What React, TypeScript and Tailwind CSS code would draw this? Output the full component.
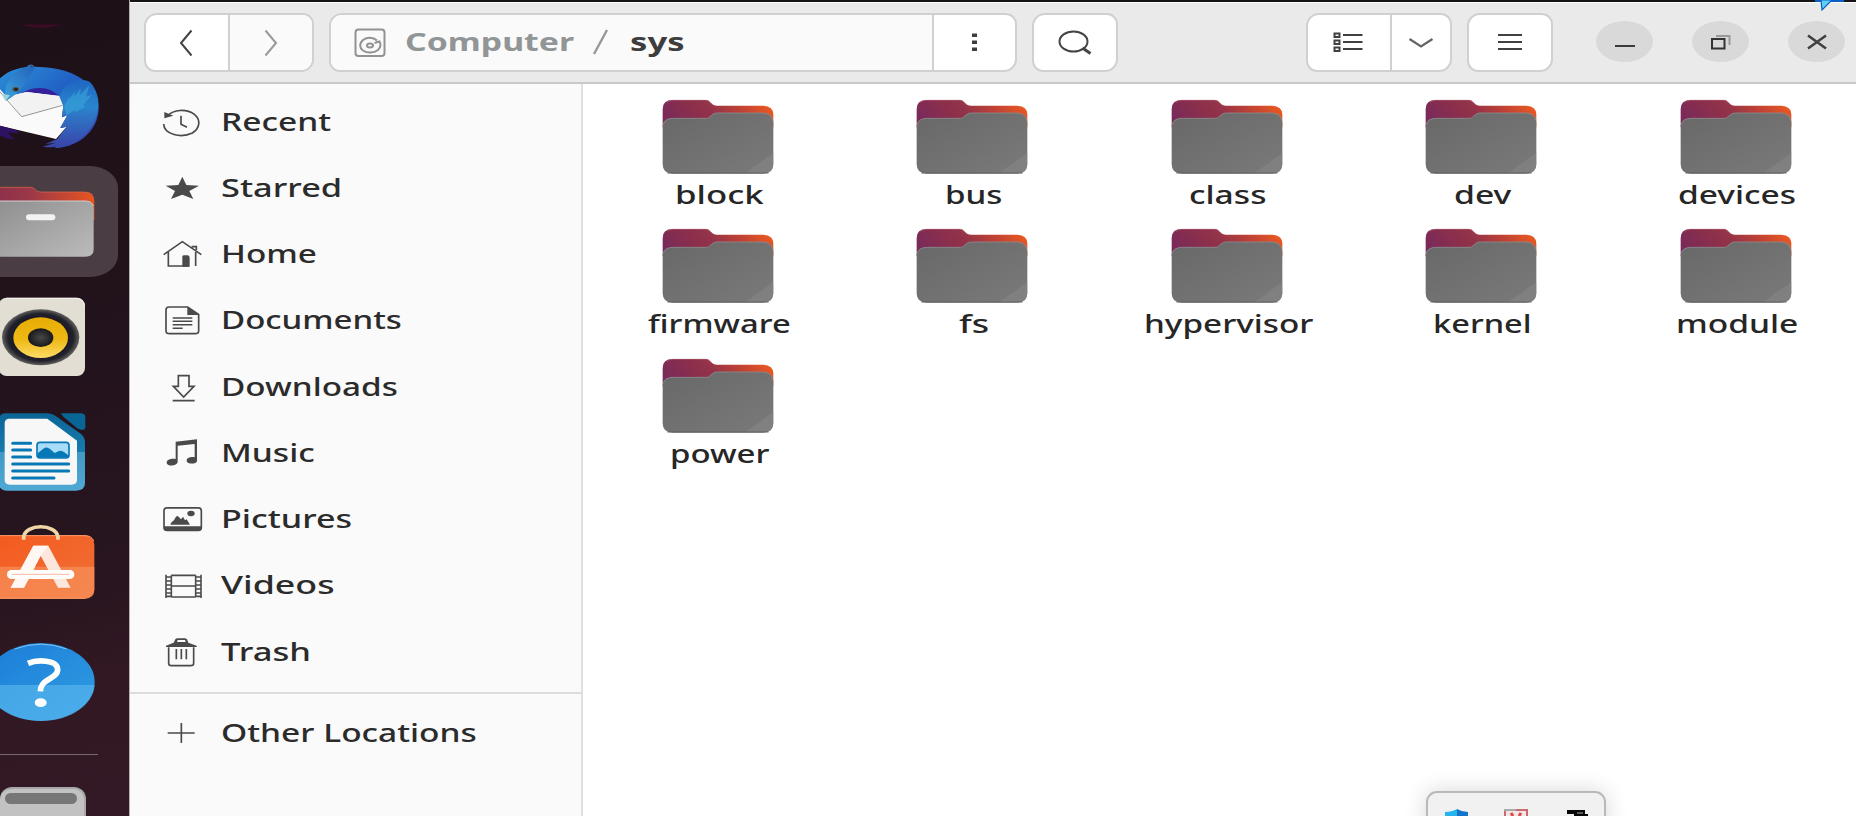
import { useLayoutEffect, useRef, useState, type ReactNode } from "react";

/** Text stretched horizontally so that it takes up exactly `width` pixels. */
function FitText({ text, width, className = "" }: { text: string; width: number; className?: string }) {
  const ref = useRef<HTMLSpanElement>(null);
  const [scale, setScale] = useState(1.3);
  useLayoutEffect(() => {
    if (ref.current) setScale(width / ref.current.offsetWidth);
  }, [width, text]);
  return (
    <span className="inline-block shrink-0" style={{ width }}>
      <span
        ref={ref}
        className={`inline-block origin-left whitespace-nowrap ${className}`}
        style={{ transform: `scaleX(${scale})` }}
      >
        {text}
      </span>
    </span>
  );
}

function Thunderbird() {
  return (
    <svg className="mt-[58px] h-[96px] w-[128px] shrink-0" viewBox="0 174 384 288">
      <defs>
        <linearGradient id="tb" x1="0" y1="0" x2="1" y2="1">
          <stop offset="0" stopColor="#2b8fd6" />
          <stop offset=".45" stopColor="#2160c4" />
          <stop offset="1" stopColor="#3d3fae" />
        </linearGradient>
        <linearGradient id="tbHead" x1="0" y1="1" x2="1" y2="0">
          <stop offset="0" stopColor="#3ba3dd" />
          <stop offset="1" stopColor="#2262ba" />
        </linearGradient>
        <linearGradient id="tbWing" x1="0" y1="0" x2="0" y2="1">
          <stop offset="0" stopColor="#1f66c2" />
          <stop offset=".4" stopColor="#2a84ce" />
          <stop offset="1" stopColor="#3a44a8" />
        </linearGradient>
      </defs>
      <path d="M0 235C40 195 110 196 160 205C240 218 296 262 296 325C296 385 245 440 165 445L200 380L182 290L100 270L0 300Z" fill="url(#tb)" />
      <path d="M50 290C90 255 150 255 178 290L175 300L60 300Z" fill="#34219a" />
      <path d="M0 268L20 290L80 276L178 288L190 318L186 352L202 346L182 384L200 380L168 417L0 377Z" fill="#fafafa" />
      <path d="M20 290L65 350L188 316L178 288L80 276Z" fill="#f2f2f3" />
      <path d="M0 276L65 350L188 316" fill="none" stroke="#96969a" strokeWidth="3" />
      <path d="M0 377L48 390L58 402L22 396L42 417C22 417 8 411 0 405Z" fill="#2d1264" />
      <path d="M178 288C190 250 240 225 272 248C308 290 304 360 250 408C216 436 170 446 128 440L168 428L136 432L172 417L200 380L180 384L202 346L186 352L190 318Z" fill="url(#tbWing)" />
      <path d="M192 320L210 285L206 300L226 274L222 292L242 264L240 284L268 256L258 290L276 284L250 316L256 320L224 338L228 328L200 346Z" fill="#39a5d8" opacity=".6" />
      <path d="M16 290C10 250 40 210 90 197L104 204C90 225 70 275 18 302L10 284Z" fill="url(#tbHead)" />
      <path d="M82 205C85 192 98 194 102 202" fill="none" stroke="#37719e" strokeWidth="4" />
      <path d="M6 282L30 286L16 303Z" fill="#9fd5d8" />
      <ellipse cx="47" cy="268" rx="10" ry="7" fill="#51513f" />
      <ellipse cx="48" cy="268" rx="5" ry="4" fill="#201a18" />
    </svg>
  );
}

function FilesApp() {
  return (
    <div className="mt-[12px] flex h-[111px] w-[118px] shrink-0 items-start rounded-r-[28px_22px] bg-[#4a3d43] pt-[18px]">
      <svg className="h-[75px] w-[100px]" viewBox="0 552 300 225">
        <defs>
          <linearGradient id="fa" x1="0" x2="1">
            <stop offset="0" stopColor="#8c3049" />
            <stop offset=".35" stopColor="#9c3848" />
            <stop offset="1" stopColor="#e9541f" />
          </linearGradient>
          <linearGradient id="fb" x1="0" y1="0" x2="1" y2="1">
            <stop offset="0" stopColor="#8f8f8f" />
            <stop offset="1" stopColor="#bbbbbb" />
          </linearGradient>
        </defs>
        <path d="M-10 562H92Q100 562 106 569Q112 576 122 576H250Q283 576 283 602V660H-10Z" fill="url(#fa)" />
        <path d="M-10 562H92Q100 562 106 569Q112 576 122 576H250Q270 576 278 584" fill="none" stroke="#e06a4e" strokeWidth="2" />
        <path d="M-10 603H255Q281 603 281 625V748Q281 770 255 770H-10Z" fill="url(#fb)" />
        <path d="M-10 603H255Q276 603 280 618" fill="none" stroke="#cfcfcf" strokeWidth="3" />
        <rect x="78" y="643" width="88" height="18" rx="9" fill="#f2f2f2" />
      </svg>
    </div>
  );
}

function Rhythmbox() {
  return (
    <svg className="mt-[20px] h-[80px] w-[88px] shrink-0" viewBox="0 51 264 240">
      <defs>
        <linearGradient id="ry" x1="0" y1="0" x2="0" y2="1">
          <stop offset="0" stopColor="#e7ac05" />
          <stop offset=".55" stopColor="#efb915" />
          <stop offset="1" stopColor="#fbdc66" />
        </linearGradient>
        <radialGradient id="rr">
          <stop offset=".65" stopColor="#171522" />
          <stop offset=".85" stopColor="#22222c" />
          <stop offset="1" stopColor="#62625f" />
        </radialGradient>
        <radialGradient id="rc">
          <stop offset="0" stopColor="#484848" />
          <stop offset="1" stopColor="#191919" />
        </radialGradient>
      </defs>
      <rect x="-4" y="53" width="259" height="235" rx="24" fill="#e2ded4" />
      <path d="M18 55H230Q250 56 253 78" fill="none" stroke="#f4f3ef" strokeWidth="3" />
      <ellipse cx="122" cy="172" rx="116" ry="84" fill="url(#rr)" />
      <ellipse cx="122" cy="173" rx="82" ry="61" fill="url(#ry)" />
      <ellipse cx="122" cy="173" rx="38" ry="28" fill="url(#rc)" />
    </svg>
  );
}

function Writer() {
  return (
    <svg className="mt-[35px] h-[80px] w-[88px] shrink-0" viewBox="0 396 264 240">
      <defs>
        <linearGradient id="wr" x1="0" y1="0" x2="0" y2="1">
          <stop offset="0" stopColor="#0b6597" />
          <stop offset=".5" stopColor="#187bad" />
          <stop offset=".5" stopColor="#4098c4" />
          <stop offset="1" stopColor="#50a8d5" />
        </linearGradient>
      </defs>
      <path d="M16 400H142Q156 400 168 409L240 460Q255 470 255 488V610Q255 632 228 632H22Q-3 632 -3 610V422Q-3 400 16 400Z" fill="url(#wr)" />
      <path d="M183 400H242Q256 400 256 412V440Q256 452 242 449Q234 447 226 440L190 410Q184 404 183 400Z" fill="#086594" />
      <path d="M28 416H142L231 482V600Q231 614 214 614H30Q14 614 14 600V430Q14 416 28 416Z" fill="#f7f7f7" />
      <path d="M38 489.500H92M38 510H92M38 531H92M38 552H206M38 573H206M38 594H162" stroke="#0678b6" strokeWidth="9" strokeLinecap="round" />
      <rect x="111" y="487" width="96" height="47" rx="9" fill="#a9dcf8" stroke="#0678b6" strokeWidth="5" />
      <path d="M113 520L130 506Q140 498 150 507L164 519L177 513Q185 510 193 517L205 526V533H113Z" fill="#0678b6" />
    </svg>
  );
}

function Software() {
  return (
    <svg className="mt-[31px] h-[80px] w-[100px] shrink-0" viewBox="0 -20 300 240">
      <defs>
        <linearGradient id="sw" x1="0" y1="0" x2="1" y2="1">
          <stop offset="0" stopColor="#f45a1f" />
          <stop offset="1" stopColor="#f07036" />
        </linearGradient>
      </defs>
      <rect x="-20" y="17" width="303" height="190" rx="28" fill="url(#sw)" />
      <path d="M0 111H283V182Q283 207 255 207H0Z" fill="#f7935e" opacity=".65" />
      <path d="M0 18H255Q275 18 281 34" fill="none" stroke="#ff9c6c" strokeWidth="3" />
      <path d="M0 206H255" fill="none" stroke="#fb965f" strokeWidth="3" />
      <path d="M71 30V22C76 -19 168 -19 174 22V30" fill="none" stroke="#f1d7a8" strokeWidth="11" />
      <path d="M100 48H145L212 174H174L122 78L72 174H32Z" fill="#fde7dc" />
      <path d="M100 48H145L122 78L72 174H32Z" fill="#fff7f2" />
      <rect x="21" y="121" width="202" height="27" rx="13.500" fill="#fffdfb" />
      <path d="M36 134H208" stroke="#f9b9a3" strokeWidth="3" />
    </svg>
  );
}

function Help() {
  return (
    <svg className="mt-[37px] h-[84px] w-[100px] shrink-0" viewBox="0 330 300 252">
      <defs>
        <linearGradient id="hp" x1="0" y1="0" x2="1" y2="1">
          <stop offset="0" stopColor="#1b7dd8" />
          <stop offset="1" stopColor="#309de2" />
        </linearGradient>
      </defs>
      <ellipse cx="122" cy="456" rx="162" ry="117" fill="url(#hp)" />
      <path d="M-40 465H284C280 526 210 573 122 573C34 573 -36 526 -40 465Z" fill="#55b4ec" opacity=".7" />
      <path d="M44 357Q122 328 200 357" fill="none" stroke="#7cc5f5" strokeWidth="3" />
      <path d="M84 400C110 389 172 388 173 418C174 448 122 443 121 484" fill="none" stroke="#fff" strokeWidth="17" />
      <ellipse cx="122" cy="518" rx="18" ry="13" fill="#fff" />
    </svg>
  );
}

function DockTrash() {
  return (
    <div className="mt-[32px] h-[40px] w-[86px] shrink-0 rounded-t-[12px] border-t-2 border-r-2 border-[#a8a8a8] bg-[#c2c2c2] pt-[4px] pl-[5px]">
      <div className="h-[11px] w-[72px] rounded-full bg-[#777777]" />
    </div>
  );
}

function Dock() {
  return (
    <aside className="flex h-full w-[129px] shrink-0 flex-col overflow-hidden bg-[linear-gradient(168deg,#1d1017_0%,#23131c_45%,#28151f_72%,#311823_82%,#321925_100%)]">
      <svg className="-mb-[30px] h-[30px] w-[128px] shrink-0" viewBox="0 0 128 30">
        <path d="M20 24.500H62Q50 28 41 28Q32 28 20 24.500Z" fill="#3a0c25" />
      </svg>
      <Thunderbird />
      <FilesApp />
      <Rhythmbox />
      <Writer />
      <Software />
      <Help />
      <div className="mt-[30px] h-px w-[98px] shrink-0 bg-[#79676f]" />
      <DockTrash />
    </aside>
  );
}

function HeaderBar() {
  const group = "flex h-[59px] shrink-0 overflow-hidden rounded-[13px_11px] border-2 border-[#d0d0d0] bg-white";
  const cell = "flex items-center justify-center";
  const round = "flex h-[41px] w-[57px] shrink-0 items-center justify-center rounded-[50%] bg-[#d9d9d9]";
  return (
    <header className="flex h-[82px] w-full shrink-0 items-start border-t border-b-2 border-t-white border-b-[#c9c9c9] bg-[#eaeaea] pt-[10px] pl-[14px]">
      <div className={`${group} w-[170px]`}>
        <div className={`${cell} w-[84px] border-r-2 border-[#d0d0d0] pr-[2px]`}>
          <svg width="14" height="28" viewBox="0 0 14 28" fill="none" stroke="#444" strokeWidth="2">
            <path d="M12.500 1.500L2 14L12.500 26.500" />
          </svg>
        </div>
        <div className={`${cell} flex-1 bg-[#fafafa]`}>
          <svg width="14" height="28" viewBox="0 0 14 28" fill="none" stroke="#999" strokeWidth="2">
            <path d="M1.500 1.500L12 14L1.500 26.500" />
          </svg>
        </div>
      </div>
      <div className={`${group} ml-[15px] w-[688px]`}>
        <div className="flex w-[603px] items-center border-r-2 border-[#d0d0d0] bg-[#fafafa] pl-[23px]">
          <svg className="shrink-0" width="33" height="30" viewBox="0 0 33 30" fill="none" stroke="#929292" strokeWidth="2">
            <rect x="1.500" y="1.500" width="29" height="26.500" rx="3" />
            <path d="M23 12.500C19 9 13 9 9 12C5 15.500 5.500 20 9 22.500C13.500 25.500 20 25 24 22C26.500 19.500 27 16 25.500 13.500L20.500 15" />
            <ellipse cx="16" cy="17.500" rx="3" ry="2" />
          </svg>
          <div className="flex items-center pb-[3px] pl-[18px] text-[25px] leading-[30px]">
            <FitText text="Computer" width={169} className="font-bold text-[#929595]" />
            <svg className="mx-[18px] mt-[2px] shrink-0" width="18" height="28" viewBox="0 0 18 28">
              <path d="M2 26L15 2" stroke="#969999" strokeWidth="2.400" />
            </svg>
            <span className="pl-[2px]">
              <FitText text="sys" width={54} className="font-bold text-[#3d3d3d]" />
            </span>
          </div>
        </div>
        <div className={`${cell} flex-1 pr-[1px]`}>
          <svg width="5" height="19" viewBox="0 0 5 19" fill="#3d3d3d">
            <path d="M0 0.500H5V4H0ZM0 7.500H5V11H0ZM0 14.500H5V18H0Z" />
          </svg>
        </div>
      </div>
      <div className={`${group} ${cell} ml-[15px] w-[86px]`}>
        <svg width="34" height="25" viewBox="0 0 34 25" fill="none" stroke="#444">
          <ellipse cx="15.500" cy="11.500" rx="14" ry="10" strokeWidth="2" />
          <path d="M24.500 18L32.500 23.500" strokeWidth="3" />
        </svg>
      </div>
      <div className={`${group} ml-[188px] w-[146px]`}>
        <div className={`${cell} w-[84px] border-r-2 border-[#d0d0d0] pr-[2px]`}>
          <svg width="30" height="22" viewBox="0 0 30 22" fill="none" stroke="#404040" strokeWidth="2">
            <path d="M1.500 1.500H6.500V5H1.500ZM1.500 8.500H6.500V12H1.500ZM1.500 15.500H6.500V19H1.500ZM10 3H29.500M10 10H29.500M10 17H29.500" />
          </svg>
        </div>
        <div className={`${cell} flex-1`}>
          <svg width="26" height="12" viewBox="0 0 26 12" fill="none" stroke="#666" strokeWidth="2.300">
            <path d="M1.500 2L13 9.500L24.500 2" />
          </svg>
        </div>
      </div>
      <div className={`${group} ${cell} ml-[15px] w-[86px] pb-[2px]`}>
        <svg width="26" height="18" viewBox="0 0 26 18" stroke="#404040" strokeWidth="2">
          <path d="M1 2H25M1 9H25M1 16H25" />
        </svg>
      </div>
      <div className="flex gap-[39px] pt-[8px] pl-[43px]">
        <div className={round}>
          <svg width="20" height="12" viewBox="0 0 20 12" stroke="#3b3b3b" strokeWidth="2">
            <path d="M0 10H20" />
          </svg>
        </div>
        <div className={round}>
          <svg width="22" height="16" viewBox="0 0 22 16" fill="none" strokeWidth="2">
            <path d="M6 2H19.500V11" stroke="#999" />
            <path d="M2 5H14.500V14.500H2Z" stroke="#333" />
          </svg>
        </div>
        <div className={round}>
          <svg width="20" height="16" viewBox="0 0 20 16" stroke="#404040" strokeWidth="2.600">
            <path d="M1 1.500L19 14.500M19 1.500L1 14.500" />
          </svg>
        </div>
      </div>
    </header>
  );
}

const ink = "#4a4a4a";

const places: { name: string; width: number; box: string; icon: ReactNode }[] = [
  {
    name: "Recent",
    width: 110,
    box: "108 48 126 96",
    icon: (
      <>
        <path d="M128 77C145 59 183 55 208 73C229 90 224 115 202 129C169 145 117 134 116 102" fill="none" stroke={ink} strokeWidth="5" />
        <path d="M118 66L145 77L118 85Z" fill={ink} />
        <path d="M168 77V103L186 112" fill="none" stroke={ink} strokeWidth="5" />
      </>
    ),
  },
  {
    name: "Starred",
    width: 121,
    box: "108 247 126 96",
    icon: <path d="M172 261L184 286L222 288L193 304L205 328L172 315L138 328L150 304L122 288L160 286Z" fill={ink} />,
  },
  {
    name: "Home",
    width: 96,
    box: "108 446 126 96",
    icon: (
      <>
        <path d="M116 496L172 457L229 496M130 488V530H192M212 488V530M200 472H214V482" fill="none" stroke={ink} strokeWidth="5" />
        <path d="M172 502Q172 498 177 498H187Q194 498 194 505V532H172Z" fill={ink} />
      </>
    ),
  },
  {
    name: "Documents",
    width: 181,
    box: "108 644 126 96",
    icon: (
      <>
        <path d="M132 653H188L221 675V724Q221 733 210 733H134Q123 733 123 724V662Q123 653 132 653Z" fill="none" stroke={ink} strokeWidth="5" />
        <path d="M187 653L222 677H187Z" fill={ink} />
        <path d="M143 686H202M143 696H202M143 706H202M143 717H173" stroke={ink} strokeWidth="4.500" />
      </>
    ),
  },
  {
    name: "Downloads",
    width: 177,
    box: "108 843 126 96",
    icon: <path d="M160 857H192V889H207L176 921L145 889H160ZM143 932H209" fill="none" stroke={ink} strokeWidth="5" />,
  },
  {
    name: "Music",
    width: 94,
    box: "108 22 126 96",
    icon: (
      <>
        <path d="M152 36L216 29V42L158 48V96C158 109 125 112 125 99C125 89 140 86 152 88Z" fill={ink} />
        <path d="M209 34H216V94C214 105 185 104 185 93C185 83 200 81 209 83Z" fill={ink} />
      </>
    ),
  },
  {
    name: "Pictures",
    width: 131,
    box: "108 220.500 126 96",
    icon: (
      <>
        <rect x="117" y="235" width="112" height="68" rx="9" fill="none" stroke={ink} strokeWidth="5" />
        <path d="M117 290H229V298Q228 304 218 304H128Q118 304 117 298Z" fill={ink} />
        <path d="M136 286C140 274 146 277 151 265Q155 257 160 261L168 269L174 262L180 272L185 269L195 286Z" fill={ink} />
        <ellipse cx="198" cy="252" rx="11" ry="8" fill={ink} />
      </>
    ),
  },
  {
    name: "Videos",
    width: 113,
    box: "108 419 126 96",
    icon: (
      <path
        d="M123 436V506M139 438V504M212 438V504M228 436V506M139 438H212M139 470H212M139 503H212M123 443H139M123 455H139M123 467H139M123 479H139M123 491H139M123 501H139M212 443H228M212 455H228M212 467H228M212 479H228M212 491H228M212 501H228"
        fill="none"
        stroke={ink}
        strokeWidth="4.800"
      />
    ),
  },
  {
    name: "Trash",
    width: 90,
    box: "108 618 126 96",
    icon: (
      <>
        <path d="M123 651V647L146 638L151 628Q153 625 158 625H179Q184 625 186 628L190 638L215 647V651ZM156 636H182L180 630H158Z" fill={ink} fillRule="evenodd" />
        <path d="M131 652V700Q131 707 139 707H197Q206 707 206 700V652M154 657V688M169 657V688M184 657V688" fill="none" stroke={ink} strokeWidth="5" />
      </>
    ),
  },
];

function Place({ name, width, box, icon }: { name: string; width: number; box: string; icon: ReactNode }) {
  return (
    <li className="flex h-[66.25px] shrink-0 items-center gap-[18px] pl-[31px]">
      <svg className="h-[32px] w-[42px] shrink-0" viewBox={box}>
        {icon}
      </svg>
      <span className="shrink-0 pb-[2px]">
        <FitText text={name} width={width} className="font-medium text-[#2b2b2b]" />
      </span>
    </li>
  );
}

function Sidebar() {
  return (
    <nav className="flex w-[453px] shrink-0 flex-col border-r-2 border-[#dfdfdf] bg-[#fafafa] pt-[4.500px] text-[25px] leading-[32px]">
      <ul>
        {places.map((p) => (
          <Place key={p.name} {...p} />
        ))}
      </ul>
      <div className="mt-[7.250px] mb-[6px] h-[1.500px] shrink-0 bg-[#dcdcdc]" />
      <ul>
        <Place
          name="Other Locations"
          width={256}
          box="108 863 126 96"
          icon={<path d="M128 911H209M169 881V941" stroke={ink} strokeWidth="5" />}
        />
      </ul>
    </nav>
  );
}

function FolderIcon() {
  return (
    <svg className="ml-px h-[76px] w-[114px] shrink-0" viewBox="93 40 342 228">
      <defs>
        <linearGradient id="fld" x1="0" y1="0.500" x2="1" y2="0.300">
          <stop offset="0" stopColor="#7a2a5a" />
          <stop offset=".3" stopColor="#8c2f4b" />
          <stop offset=".45" stopColor="#93334a" />
          <stop offset=".7" stopColor="#bd4135" />
          <stop offset="1" stopColor="#ee5a20" />
        </linearGradient>
        <linearGradient id="front" x1="0" y1="0" x2="1" y2="1">
          <stop offset="0" stopColor="#686868" />
          <stop offset="1" stopColor="#7a7a7a" />
        </linearGradient>
      </defs>
      <path d="M98 125V70Q98 43 128 43H228Q235 43 240 49L247 56Q252 60 260 60H400Q430 62 430 86V125Z" fill="url(#fld)" />
      <path d="M110 50Q118 44 128 44H228Q235 44 240 50L247 57" fill="none" stroke="#ad5869" strokeWidth="2" />
      <path d="M98 120Q100 98 130 98H230Q236 98 240 93L249 86Q254 82 262 82H400Q428 83 430 110V236Q430 264 400 264H128Q98 264 98 236Z" fill="url(#front)" />
      <path d="M100 116Q104 98 130 98H230Q236 98 240 93L249 86Q254 82 262 82H400Q424 83 428 104" fill="none" stroke="#8d8d8d" strokeWidth="2.500" />
      <path d="M430 202V236Q430 262 400 262H346Z" fill="#888" opacity=".5" />
      <path d="M112 262H416" stroke="#5c5c5c" strokeWidth="2.500" />
    </svg>
  );
}

const folders = [
  { name: "block", width: 89 },
  { name: "bus", width: 57 },
  { name: "class", width: 78 },
  { name: "dev", width: 58 },
  { name: "devices", width: 118 },
  { name: "firmware", width: 143 },
  { name: "fs", width: 30 },
  { name: "hypervisor", width: 169 },
  { name: "kernel", width: 99 },
  { name: "module", width: 122 },
  { name: "power", width: 99 },
];

function FolderGrid() {
  return (
    <main className="min-w-0 flex-1 overflow-hidden bg-white pt-[14.500px] pl-[7px]">
      <ul className="grid w-[1272.500px] grid-cols-5">
        {folders.map((f) => (
          <li key={f.name} className="flex h-[129.500px] flex-col items-center">
            <FolderIcon />
            <div className="pt-[3px] pl-[4px] text-[25px] leading-[32px] font-medium text-[#262626]">
              <FitText text={f.name} width={f.width} />
            </div>
          </li>
        ))}
      </ul>
    </main>
  );
}

function TrayPopup() {
  return (
    <div className="absolute top-[791px] left-[1426px] flex h-[60px] w-[180px] items-start rounded-[11px] border-2 border-[#b9b9b9] bg-[#f1f1f1] pt-[16px] pl-[17px] shadow-[0_0_22px_rgba(0,0,0,0.16)]">
      <svg width="24" height="24" viewBox="0 0 24 24">
        <path d="M0 3Q7 3 12 0V24Q1 18 0 8Z" fill="#25b4ed" />
        <path d="M12 0Q17 3 23 3V8Q22 18 12 24Z" fill="#1473cc" />
      </svg>
      <svg className="ml-[35px]" width="24" height="24" viewBox="0 0 24 24">
        <path d="M1 1H23V24H1Z" fill="#f6e5e5" stroke="#c86a70" strokeWidth="2" />
        <path d="M0 1H12" stroke="#aaa" strokeWidth="2" />
        <path d="M7 4L9 7M17 4L15 7" stroke="#d84a4a" strokeWidth="3" />
      </svg>
      <svg className="ml-[39px]" width="22" height="24" viewBox="0 0 22 24">
        <path d="M0 1H18V5H21V24H7V5H0Z" fill="#080808" />
        <path d="M10 4H16M11 8H16V11" fill="none" stroke="#aaa" strokeWidth="1" />
      </svg>
    </div>
  );
}

export default function App() {
  return (
    <div className="relative flex h-[816px] w-[1856px] flex-col overflow-hidden bg-[#171415] font-['Noto_Sans',sans-serif]">
      <div className="h-[2px] shrink-0 bg-[#171415]" />
      <div className="-mt-[2px] flex min-h-0 flex-1">
        <Dock />
        <div className="flex min-w-0 flex-1 flex-col border-l border-[#b5b0b3] bg-[#171415] pt-[2px]">
          <HeaderBar />
          <div className="flex min-h-0 flex-1">
            <Sidebar />
            <FolderGrid />
          </div>
        </div>
      </div>
      <svg className="absolute top-0 left-[1815px]" width="30" height="12" viewBox="0 0 30 12">
        <path d="M0 0H29V2H0Z" fill="#0b5fc4" />
        <path d="M6 0H17L7 10Z" fill="#5fd0fb" stroke="#0b5fc4" strokeWidth="1.200" />
      </svg>
      <TrayPopup />
    </div>
  );
}
